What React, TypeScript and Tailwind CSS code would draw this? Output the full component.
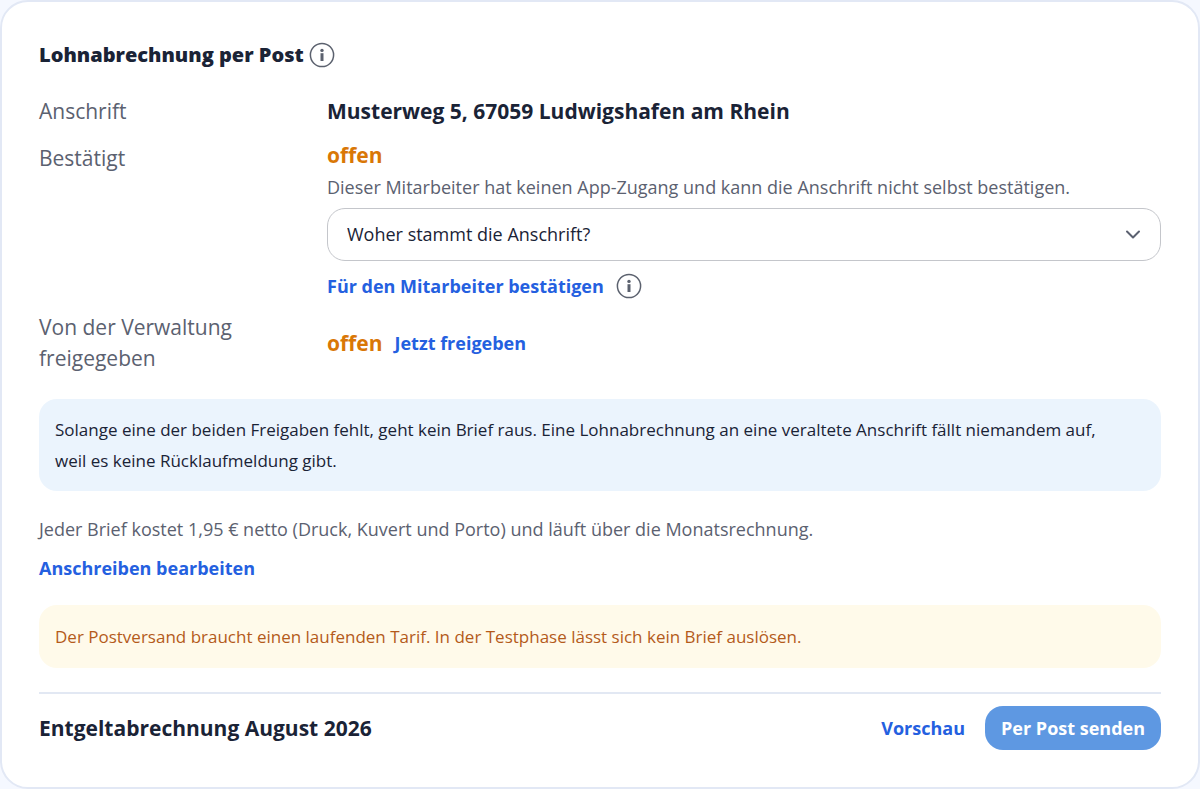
import type { ReactNode } from "react";

type RowProps = {
  label: string;
  children: ReactNode;
};

function InfoButton({ label }: { label: string }) {
  return (
    <button type="button" aria-label={label} className="shrink-0 text-[#5b616e]">
      <svg width="26" height="26" viewBox="0 0 26 26" fill="none">
        <circle cx="13" cy="13" r="11.6" stroke="currentColor" strokeWidth="1.5" />
        <circle cx="13" cy="8.4" r="1.7" fill="currentColor" />
        <path d="M13 11.2v7.8" stroke="currentColor" strokeWidth="3" />
      </svg>
    </button>
  );
}

function Row({ label, children }: RowProps) {
  return (
    <div className="grid grid-cols-[264px_1fr] gap-x-6">
      <dt className="text-[21px] leading-[31px] text-[#5b6170]">{label}</dt>
      <dd className="min-w-0">{children}</dd>
    </div>
  );
}

function LinkButton({ children }: { children: ReactNode }) {
  return (
    <button type="button" className="text-[18px] leading-6 font-bold text-[#2460e0]">
      {children}
    </button>
  );
}

export default function App() {
  return (
    <div className="bg-[#f5f8ff] font-['Open_Sans','Noto_Sans',sans-serif] text-[#1a2336]">
      <section className="rounded-[28px] border-2 border-[#e2e8f5] bg-white px-[37px] pt-9 pb-[37px]">
        <header className="flex items-center gap-[5px]">
          <h2 className="text-[20px] leading-[34px] font-extrabold">Lohnabrechnung per Post</h2>
          <InfoButton label="Info zur Lohnabrechnung per Post" />
        </header>

        <dl className="mt-6 flex flex-col gap-[13px]">
          <div className="flex flex-col gap-4">
            <Row label="Anschrift">
              <p className="text-[21px] leading-[31px] font-bold">
                Musterweg 5, 67059 Ludwigshafen am Rhein
              </p>
            </Row>
            <Row label="Bestätigt">
              <p className="text-[21px] leading-6 font-bold text-[#d97706]">offen</p>
              <p className="mt-[7px] text-[18px] leading-[26px] text-[#5b6170]">
                Dieser Mitarbeiter hat keinen App-Zugang und kann die Anschrift nicht selbst bestätigen.
              </p>
              <div className="relative mt-2">
                <select
                  aria-label="Woher stammt die Anschrift?"
                  className="h-[53px] w-full appearance-none rounded-[18px] border border-[#c4c6cb] bg-white px-[19px] text-[18px]"
                >
                  <option>Woher stammt die Anschrift?</option>
                </select>
                <svg
                  className="pointer-events-none absolute top-5 right-5"
                  width="16"
                  height="12"
                  viewBox="0 0 16 12"
                  fill="none"
                >
                  <path d="M2 3.5l6 6 6-6" stroke="#5b6170" strokeWidth="2" strokeLinecap="round" strokeLinejoin="round" />
                </svg>
              </div>
              <div className="mt-3 flex items-center gap-3">
                <LinkButton>Für den Mitarbeiter bestätigen</LinkButton>
                <InfoButton label="Info zur Bestätigung" />
              </div>
            </Row>
          </div>
          <Row label="Von der Verwaltung freigegeben">
            <div className="flex h-full items-center gap-3">
              <span className="text-[21px] leading-7 font-bold text-[#d97706]">offen</span>
              <LinkButton>Jetzt freigeben</LinkButton>
            </div>
          </Row>
        </dl>

        <p className="mt-[25px] rounded-[18px] bg-[#ebf4fd] px-4 py-[15px] text-[17px] leading-[31px]">
          Solange eine der beiden Freigaben fehlt, geht kein Brief raus. Eine Lohnabrechnung an eine
          veraltete Anschrift fällt niemandem auf,
          <br />
          weil es keine Rücklaufmeldung gibt.
        </p>

        <p className="mt-[23px] text-[18px] leading-[31px] text-[#5b6170]">
          Jeder Brief kostet 1,95 € netto (Druck, Kuvert und Porto) und läuft über die Monatsrechnung.
        </p>
        <div className="mt-[11px]">
          <LinkButton>Anschreiben bearbeiten</LinkButton>
        </div>

        <p className="mt-6 rounded-[18px] bg-[#fffaea] px-4 py-4 text-[17px] leading-[31px] text-[#b45a1b]">
          Der Postversand braucht einen laufenden Tarif. In der Testphase lässt sich kein Brief auslösen.
        </p>

        <footer className="mt-6 flex items-center gap-5 border-t-2 border-[#e2e8f3] pt-3">
          <h3 className="mr-auto text-[21px] leading-8 font-bold">Entgeltabrechnung August 2026</h3>
          <LinkButton>Vorschau</LinkButton>
          <button
            type="button"
            className="h-11 rounded-[18px] bg-[#5e98e2] px-4 text-[18px] font-bold text-white"
          >
            Per Post senden
          </button>
        </footer>
      </section>
    </div>
  );
}
